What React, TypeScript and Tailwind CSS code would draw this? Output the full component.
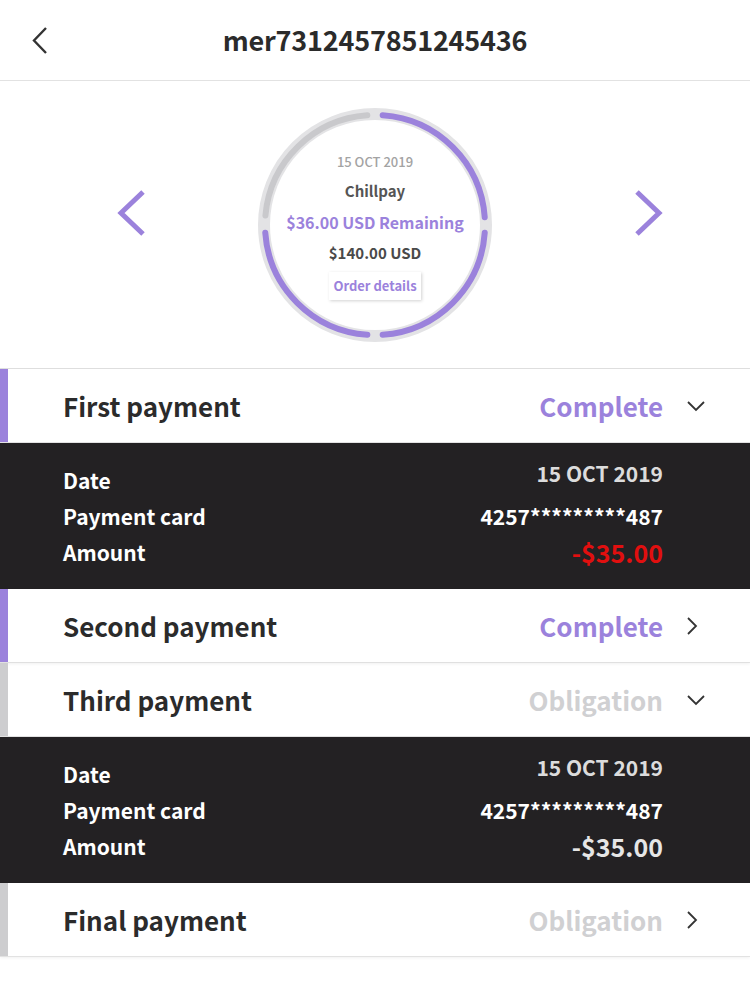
// Installment overview for one merchant order
type Payment = {
  title: string;
  status: "Complete" | "Obligation";
  open: boolean;
  date: string;
  card: string;
  amount: string;
};

const payments: Payment[] = [
  { title: "First payment", status: "Complete", open: true, date: "15 OCT 2019", card: "4257*********487", amount: "-$35.00" },
  { title: "Second payment", status: "Complete", open: false, date: "15 OCT 2019", card: "4257*********487", amount: "-$35.00" },
  { title: "Third payment", status: "Obligation", open: true, date: "15 OCT 2019", card: "4257*********487", amount: "-$35.00" },
  { title: "Final payment", status: "Obligation", open: false, date: "15 OCT 2019", card: "4257*********487", amount: "-$35.00" },
];

const font = { fontFamily: '"Noto Sans CJK SC", "Noto Sans", sans-serif' };

// arc path on a circle centred at (c,c), angles in degrees, 0 = top, clockwise
const arc = (c: number, r: number, from: number, to: number) => {
  const pt = (a: number) => {
    const rad = ((a - 90) * Math.PI) / 180;
    return `${(c + r * Math.cos(rad)).toFixed(2)} ${(c + r * Math.sin(rad)).toFixed(2)}`;
  };
  return `M ${pt(from)} A ${r} ${r} 0 0 1 ${pt(to)}`;
};

const ProgressRing = () => (
  <div className="relative w-[236px] h-[236px]">
    <svg width="236" height="236" viewBox="0 0 236 236" className="absolute inset-0">
      <circle cx="118" cy="118" r="111" fill="white" stroke="#e3e3e5" strokeWidth="12" />
      <path d={arc(118, 110, 275, 356)} stroke="#c9c9cc" strokeWidth="6" fill="none" strokeLinecap="round" />
      <path d={arc(118, 110, 4, 86)} stroke="#9b82dc" strokeWidth="6" fill="none" strokeLinecap="round" />
      <path d={arc(118, 110, 94, 176)} stroke="#9b82dc" strokeWidth="6" fill="none" strokeLinecap="round" />
      <path d={arc(118, 110, 184, 266)} stroke="#9b82dc" strokeWidth="6" fill="none" strokeLinecap="round" />
    </svg>
    <div className="relative flex flex-col items-center pt-[45px]">
      <div className="text-[13px] leading-[20px] font-medium text-[#a3a3a3]">15 OCT 2019</div>
      <div className="mt-[9px] text-[15px] leading-[20px] font-semibold text-[#555555]">Chillpay</div>
      <div className="mt-[11px] text-[16px] leading-[20px] font-bold text-[#9b82dc]">$36.00 USD Remaining</div>
      <div className="mt-[11px] text-[15px] leading-[20px] font-semibold text-[#4a4a4a]">$140.00 USD</div>
      <div className="mt-[9px] px-[4px] h-[28px] flex items-center bg-white text-[13px] font-semibold text-[#9b82dc] shadow-[1px_1px_3px_rgba(0,0,0,0.18)]">
        Order details
      </div>
    </div>
  </div>
);

const Arrow = ({ dir }: { dir: "left" | "right" }) => (
  <svg width="34" height="48" viewBox="0 0 34 48">
    <path
      d={dir === "left" ? "M28 3 L6 24 L28 45" : "M6 3 L28 24 L6 45"}
      stroke="#9b82dc"
      strokeWidth="5"
      fill="none"
    />
  </svg>
);

const ChevDown = () => (
  <svg width="20" height="12" viewBox="0 0 20 12">
    <path d="M2 2 L10 10 L18 2" stroke="#333" strokeWidth="1.8" fill="none" />
  </svg>
);

const ChevRight = () => (
  <svg width="12" height="20" viewBox="0 0 12 20">
    <path d="M2 2 L10 10 L2 18" stroke="#333" strokeWidth="1.8" fill="none" />
  </svg>
);

const App = () => {
  return (
    <main className="w-[750px] min-h-[1000px] bg-white text-[#2b2b2b]" style={font}>
      {/* Header */}
      <header className="h-[81px] flex items-center border-b border-[#e2e2e2] relative">
        <svg width="18" height="30" viewBox="0 0 18 30" className="absolute left-[31px] top-[26px]">
          <path d="M15 2 L3 14.5 L15 27" stroke="#333" strokeWidth="2.4" fill="none" />
        </svg>
        <h1 className="w-full text-center text-[27px] font-bold tracking-[-0.2px]">mer7312457851245436</h1>
      </header>

      {/* Ring with pager */}
      <section className="h-[287px] flex items-center justify-center pl-[30px]">
        <div className="flex items-center">
          <div className="w-[34px] mr-[108px] -mt-[24px]"><Arrow dir="left" /></div>
          <ProgressRing />
          <div className="w-[34px] ml-[138px] -mt-[24px]"><Arrow dir="right" /></div>
        </div>
      </section>

      {/* Payments */}
      <div className="border-t border-[#e0e0e0]">
        {payments.map((p) => {
          const done = p.status === "Complete";
          return (
            <div key={p.title}>
              <div className="flex h-[74px] border-b border-[#e2e2e2] shadow-[0_1px_3px_rgba(0,0,0,0.06)]">
                <div className={`w-[8px] ${done ? "bg-[#9b82dc]" : "bg-[#cdcdcf]"}`} />
                <div className="flex-1 flex items-center pl-[55px] pr-[44px]">
                  <span className="flex-1 text-[26px] font-bold">{p.title}</span>
                  <span className={`text-[26px] font-bold ${done ? "text-[#9b82dc]" : "text-[#d0d0d2]"}`}>{p.status}</span>
                  <span className="w-[43px] flex justify-end">
                    {p.open ? (
                      <ChevDown />
                    ) : (
                      <span className="mr-[8px] flex"><ChevRight /></span>
                    )}
                  </span>
                </div>
              </div>
              {p.open && (
                <div className="bg-[#232123] h-[146px] pt-[20px] pl-[63px] pr-[87px] text-white">
                  <div className="flex justify-between h-[36px] items-center">
                    <span className="text-[21px] font-bold">Date</span>
                    <span className="self-start leading-[20px] text-[21px] font-semibold text-[#dcdcdc]">{p.date}</span>
                  </div>
                  <div className="flex justify-between h-[36px] items-center">
                    <span className="text-[21px] font-bold">Payment card</span>
                    <span className="text-[21px] font-semibold">{p.card}</span>
                  </div>
                  <div className="flex justify-between h-[36px] items-center">
                    <span className="text-[21px] font-bold">Amount</span>
                    <span className={`text-[25px] font-semibold ${done ? "text-[#e10f0f]" : "text-[#e6e6e6]"}`}>{p.amount}</span>
                  </div>
                </div>
              )}
            </div>
          );
        })}
      </div>
    </main>
  );
};

export default App;
